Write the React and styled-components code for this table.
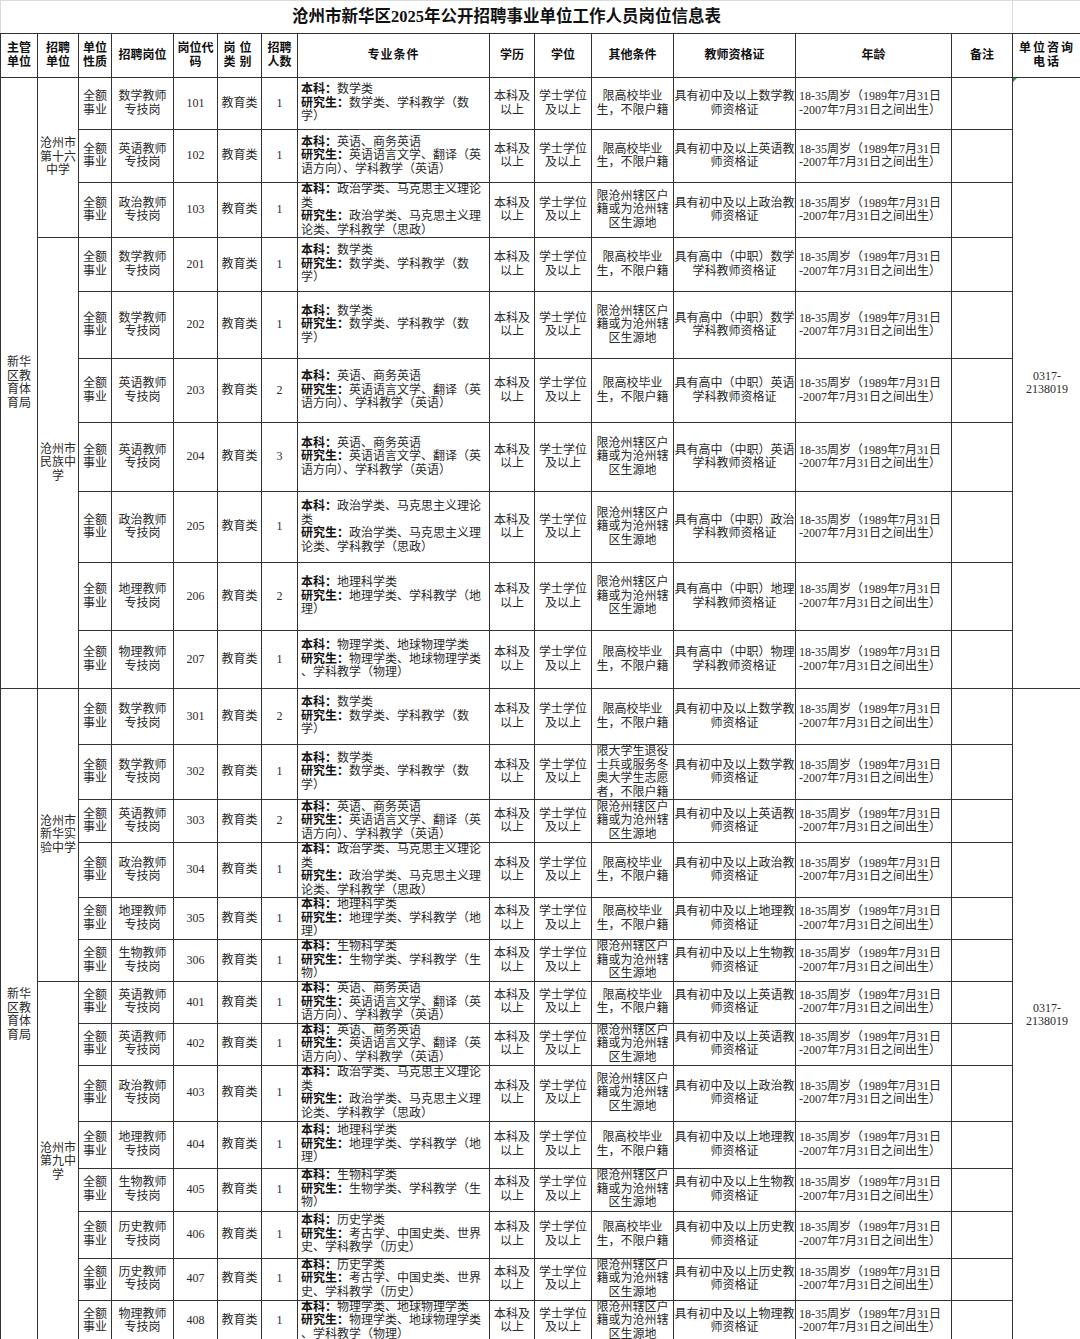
import React from "react";
import styled, { createGlobalStyle } from "styled-components";

const GlobalStyle = createGlobalStyle`
  html, body {
    margin: 0;
    padding: 0;
    background: #fff;
  }
  body {
    font-family: "Liberation Serif", "Noto Sans CJK SC", serif;
    color: #2a2a2a;
  }
`;

const Sheet = styled.table`
  width: 1080px;
  border-collapse: collapse;
  table-layout: fixed;
  font-size: 12px;
  line-height: 13.5px;
`;

const Col = styled.col`
  width: ${p => p.$w}px;
`;

const Row = styled.tr`
  height: ${p => p.$h}px;
`;

const TitleCell = styled.td`
  padding: 0;
  text-align: center;
  vertical-align: middle;
  font-size: 16.5px;
  font-weight: bold;
  color: #111;
  border: 1px solid #dadada;
  border-bottom: 1px solid #333;
`;

const Blank = styled.td`
  padding: 0;
  border: 1px solid #dadada;
  border-right: 0;
  border-bottom: 1px solid #333;
`;

const Head = styled.th`
  padding: 0;
  border: 1px solid #333;
  border-right: ${p => (p.$last ? "0" : "1px solid #333")};
  text-align: center;
  vertical-align: middle;
  font-weight: bold;
  color: #111;
  letter-spacing: ${p => p.$ls || 0}px;
`;

const Cell = styled.td`
  position: relative;
  padding: ${p => (p.$left ? "0 0 0 3px" : "0")};
  border: 1px solid #333;
  border-right: ${p => (p.$last ? "0" : "1px solid #333")};
  text-align: ${p => (p.$left ? "left" : "center")};
  vertical-align: middle;
  overflow: visible;

  &::before {
    content: "";
    display: ${p => (p.$mark ? "block" : "none")};
    position: absolute;
    left: 0;
    top: 0;
    width: 0;
    height: 0;
    border-top: 4px solid #2e9b3e;
    border-right: 4px solid transparent;
  }
`;

const Line = styled.div`
  white-space: nowrap;
`;

const Label = styled.b`
  font-weight: bold;
  color: #111;
`;

const COLS = [37, 41, 33, 62, 44, 44, 36, 192, 45, 57, 82, 122, 156, 61, 68];

const MAJOR = {
  数学: ["本科：数学类", "研究生：数学类、学科教学（数", "学）"],
  英语: ["本科：英语、商务英语", "研究生：英语语言文学、翻译（英", "语方向）、学科教学（英语）"],
  政治: ["本科：政治学类、马克思主义理论", "类", "研究生：政治学类、马克思主义理", "论类、学科教学（思政）"],
  地理: ["本科：地理科学类", "研究生：地理学类、学科教学（地", "理）"],
  物理: ["本科：物理学类、地球物理学类", "研究生：物理学类、地球物理学类", "、学科教学（物理）"],
  生物: ["本科：生物科学类", "研究生：生物学类、学科教学（生", "物）"],
  历史: ["本科：历史学类", "研究生：考古学、中国史类、世界", "史、学科教学（历史）"]
};

const OTHER = {
  A: ["限高校毕业", "生，不限户籍"],
  B: ["限沧州辖区户", "籍或为沧州辖", "区生源地"],
  C: ["限大学生退役", "士兵或服务冬", "奥大学生志愿", "者，不限户籍"]
};

const certMid = s => ["具有初中及以上" + s + "教", "师资格证"];
const certHigh = s => ["具有高中（中职）" + s, "学科教师资格证"];

const AGE = ["18-35周岁（1989年7月31日", "-2007年7月31日之间出生）"];

const DIVISIONS = [
  {
    schools: [
      {
        name: ["沧州市", "第十六", "中学"],
        rows: [
          ["101", "数学", 1, "A", "mid", 52],
          ["102", "英语", 1, "A", "mid", 53],
          ["103", "政治", 1, "B", "mid", 55]
        ]
      },
      {
        name: ["沧州市", "民族中", "学"],
        rows: [
          ["201", "数学", 1, "A", "high", 54],
          ["202", "数学", 1, "B", "high", 67],
          ["203", "英语", 2, "A", "high", 64],
          ["204", "英语", 3, "B", "high", 69],
          ["205", "政治", 1, "B", "high", 71],
          ["206", "地理", 2, "B", "high", 68],
          ["207", "物理", 1, "A", "high", 58]
        ]
      }
    ]
  },
  {
    schools: [
      {
        name: ["沧州市", "新华实", "验中学"],
        rows: [
          ["301", "数学", 2, "A", "mid", 56],
          ["302", "数学", 1, "C", "mid", 54],
          ["303", "英语", 2, "B", "mid", 43],
          ["304", "政治", 1, "A", "mid", 54],
          ["305", "地理", 1, "A", "mid", 42],
          ["306", "生物", 1, "B", "mid", 42]
        ]
      },
      {
        name: ["沧州市", "第九中", "学"],
        rows: [
          ["401", "英语", 1, "A", "mid", 41],
          ["402", "英语", 1, "B", "mid", 42],
          ["403", "政治", 1, "B", "mid", 56],
          ["404", "地理", 1, "A", "mid", 47],
          ["405", "生物", 1, "B", "mid", 43],
          ["406", "历史", 1, "A", "mid", 47],
          ["407", "历史", 1, "B", "mid", 42],
          ["408", "物理", 1, "B", "mid", 42]
        ]
      }
    ]
  }
];

const lines = arr => arr.map((t, i) => <Line key={i}>{t}</Line>);

const majorLines = arr =>
  arr.map((t, i) => {
    const m = t.match(/^(本科|研究生)(：)(.*)$/);
    return (
      <Line key={i}>
        {m ? (
          <>
            <Label>{m[1] + m[2]}</Label>
            {m[3]}
          </>
        ) : (
          t
        )}
      </Line>
    );
  });

function buildRows() {
  const out = [];
  DIVISIONS.forEach((div, di) => {
    const divCount = div.schools.reduce((n, s) => n + s.rows.length, 0);
    div.schools.forEach((school, si) => {
      school.rows.forEach((r, ri) => {
        const [code, subj, count, other, level, h] = r;
        const firstOfDiv = si === 0 && ri === 0;
        out.push(
          <Row key={code} $h={h}>
            {firstOfDiv && (
              <Cell rowSpan={divCount}>{lines(["新华", "区教", "育体", "育局"])}</Cell>
            )}
            {ri === 0 && <Cell rowSpan={school.rows.length}>{lines(school.name)}</Cell>}
            <Cell>{lines(["全额", "事业"])}</Cell>
            <Cell>{lines([subj + "教师", "专技岗"])}</Cell>
            <Cell>{code}</Cell>
            <Cell>教育类</Cell>
            <Cell>{count}</Cell>
            <Cell $left>{majorLines(MAJOR[subj])}</Cell>
            <Cell>{lines(["本科及", "以上"])}</Cell>
            <Cell>{lines(["学士学位", "及以上"])}</Cell>
            <Cell>{lines(OTHER[other])}</Cell>
            <Cell>{lines(level === "mid" ? certMid(subj) : certHigh(subj))}</Cell>
            <Cell $left>{lines(AGE)}</Cell>
            <Cell />
            {firstOfDiv && (
              <Cell rowSpan={divCount} $last $mark={di === 0}>
                {lines(["0317-", "2138019"])}
              </Cell>
            )}
          </Row>
        );
      });
    });
  });
  return out;
}

export default function App() {
  return (
    <>
      <GlobalStyle />
      <Sheet>
        <colgroup>
          {COLS.map((w, i) => (
            <Col key={i} $w={w} />
          ))}
        </colgroup>
        <tbody>
          <Row $h={33}>
            <TitleCell colSpan={14}>沧州市新华区2025年公开招聘事业单位工作人员岗位信息表</TitleCell>
            <Blank />
          </Row>
          <Row $h={44}>
            <Head>{lines(["主管", "单位"])}</Head>
            <Head>{lines(["招聘", "单位"])}</Head>
            <Head>{lines(["单位", "性质"])}</Head>
            <Head>招聘岗位</Head>
            <Head>{lines(["岗位代", "码"])}</Head>
            <Head $ls={4}>{lines(["岗位", "类别"])}</Head>
            <Head>{lines(["招聘", "人数"])}</Head>
            <Head $ls={1}>专业条件</Head>
            <Head>学历</Head>
            <Head>学位</Head>
            <Head>其他条件</Head>
            <Head>教师资格证</Head>
            <Head>年龄</Head>
            <Head>备注</Head>
            <Head $last $ls={2}>{lines(["单位咨询", "电话"])}</Head>
          </Row>
          {buildRows()}
        </tbody>
      </Sheet>
    </>
  );
}
